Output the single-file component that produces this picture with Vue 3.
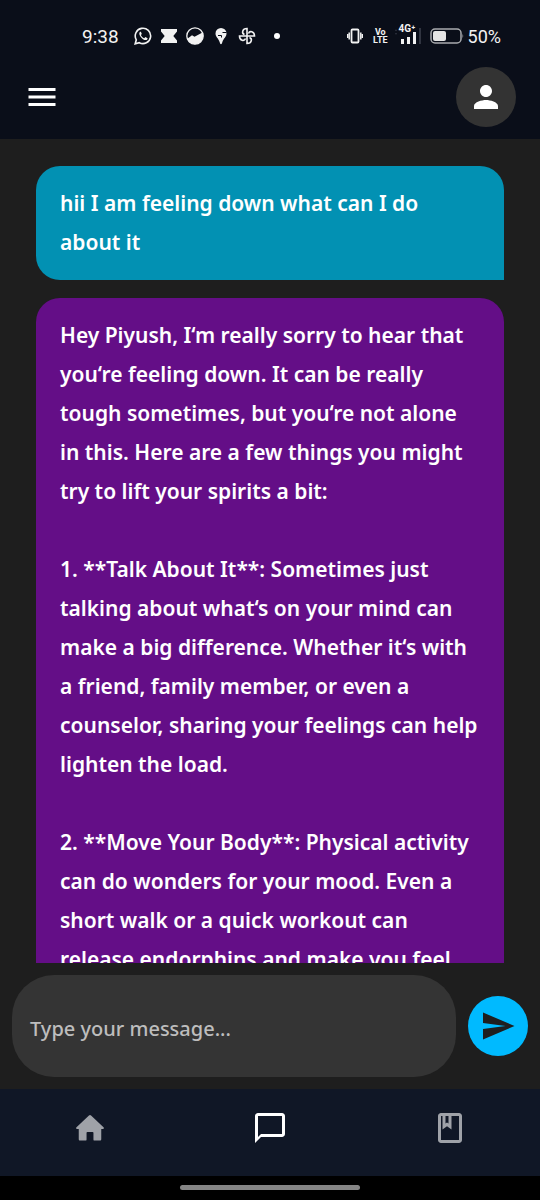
<script setup>
import { ref } from 'vue'

const draft = ref('')

const messages = [
  { from: 'user', text: 'hii I am feeling down what can I do\nabout it' },
  {
    from: 'bot',
    text: `Hey Piyush, I‘m really sorry to hear that
you‘re feeling down. It can be really
tough sometimes, but you‘re not alone
in this. Here are a few things you might
try to lift your spirits a bit:

1. **Talk About It**: Sometimes just
talking about what‘s on your mind can
make a big difference. Whether it‘s with
a friend, family member, or even a
counselor, sharing your feelings can help
lighten the load.

2. **Move Your Body**: Physical activity
can do wonders for your mood. Even a
short walk or a quick workout can
release endorphins and make you feel`,
  },
]

const tabs = [
  {
    name: 'Home',
    path: 'M11.3 3.6a1 1 0 0 1 1.4 0l8.3 7.9c.5.5.3 1.2-.4 1.2h-1.1v6.8c0 .6-.3.9-.9.9h-3.5c-.5 0-.8-.3-.8-.8v-4.4c0-.4-.2-.6-.6-.6h-3.4c-.4 0-.6.2-.6.6v4.4c0 .5-.3.8-.8.8H5.4c-.6 0-.9-.3-.9-.9v-6.8H3.4c-.7 0-.9-.7-.4-1.2z',
  },
  {
    name: 'Chat',
    active: true,
    path: 'M20 2H4c-1.1 0-2 .9-2 2v18l4-4h14c1.1 0 2-.9 2-2V4c0-1.1-.9-2-2-2zm0 14H6l-2 2V4h16v12z',
  },
  {
    name: 'Journal',
    path: 'M18 2H6c-1.1 0-2 .9-2 2v16c0 1.1.9 2 2 2h12c1.1 0 2-.9 2-2V4c0-1.1-.9-2-2-2zM9 4h2v5l-1-.75L9 9V4zm9 16H6V4h1v9l3-2.25L13 13V4h5v16z',
  },
]
</script>

<template>
  <div class="screen">
    <div class="status">
      <span class="clock">9:38</span>
      <div class="notifications">
        <svg viewBox="0 0 18 18" fill="none" stroke="currentColor">
          <path d="M1.2 16.8l1.1-4A7.7 7.7 0 1 1 5.3 15.7z" stroke-width="1.6" />
          <path d="M6.2 4.7c-1.3 1-1.2 2.6.2 4.7 1.6 2.3 3.9 3.9 5.5 3.7 1.1-.2 1.7-.9 1.7-1.9l-2.2-1.1-1.2 1.2C8.8 10.7 7.5 9.5 6.9 8.1l.9-1.1-.9-2.3z" fill="currentColor" stroke="none" />
        </svg>
        <svg viewBox="0 0 18 18" fill="currentColor">
          <path d="M1 2h16v2.5L13.3 9l3.7 4.5V16H1v-2.5L4.7 9 1 4.5z" />
        </svg>
        <svg viewBox="0 0 18 18">
          <circle cx="9" cy="9" r="8.2" fill="none" stroke="currentColor" stroke-width="1.3" />
          <path d="M1 12l5-3.8 2.5 1.5 8-4.2A8.3 8.3 0 0 1 1 12z" fill="currentColor" />
        </svg>
        <svg viewBox="0 0 18 18">
          <path d="M9 1a5.5 5.5 0 0 0-5.5 5.5c0 3.5 3 4.6 4.200 8.800.3 1.200.7 1.900 1.300 1.900s1-.7 1.300-1.900c1.200-4.200 4.200-5.300 4.200-8.800A5.500 5.500 0 0 0 9 1z" fill="currentColor" />
          <path d="M14.5 5.5h-4M6 8.5h3.500v2" fill="none" stroke="#0a0e19" stroke-width="1" />
        </svg>
        <svg viewBox="0 0 18 18" fill="none" stroke="currentColor" stroke-width="1.6">
          <path d="M9 9V1.5c-5 0-5.5 5-2.5 6M9 9h7.5c0-5-5-5.5-6-2.5M9 9v7.5c5 0 5.5-5 2.5-6M9 9H1.500c0 5 5 5.500 6 2.500" />
        </svg>
      </div>
      <span class="dot"></span>
      <div class="system">
        <svg class="vibrate" viewBox="0 0 16 16" fill="none" stroke="currentColor" stroke-width="1.5">
          <rect x="4.5" y="1.5" width="7" height="13" rx="1" stroke-width="1.8" />
          <path d="M2.2 4.5v7M13.8 4.5v7M.5 6v4M15.5 6v4" />
        </svg>
        <span class="volte">Vo<br />LTE</span>
        <div class="signal">
          <span>4G⁺</span>
          <svg viewBox="0 0 28 18">
            <path d="M7 12h3v5H7zM13 10h3v7h-3zM19 5h3v12h-3z" fill="currentColor" />
            <path d="M25 1h2v16h-2zM1 4l1-2 1 2zM1 6l1 2 1-2z" fill="#303440" />
          </svg>
        </div>
        <svg class="battery" viewBox="0 0 34 16">
          <rect x="1" y="1" width="30" height="14" rx="4" fill="none" stroke="#a9abae" stroke-width="1.5" />
          <rect x="3" y="3" width="13" height="10" rx="2" fill="#e4e4e4" />
          <path d="M32.5 5.5q1.5 2.5 0 5z" fill="#a9abae" />
        </svg>
        <span class="percent">50%</span>
      </div>
    </div>

    <header class="topbar">
      <button class="menu" aria-label="Menu">
        <svg class="icon" viewBox="0 0 24 24"><path d="M3 18h18v-2H3v2zm0-5h18v-2H3v2zm0-7v2h18V6H3z" /></svg>
      </button>
      <button class="avatar" aria-label="Profile">
        <svg class="icon" viewBox="0 0 24 24"><path d="M12 12c2.21 0 4-1.79 4-4s-1.79-4-4-4-4 1.79-4 4 1.79 4 4 4zm0 2c-2.67 0-8 1.34-8 4v2h16v-2c0-2.66-5.33-4-8-4z" /></svg>
      </button>
    </header>

    <main class="chat">
      <p v-for="m in messages" :key="m.from" class="bubble" :class="m.from">{{ m.text }}</p>
    </main>

    <form class="composer" @submit.prevent>
      <textarea v-model="draft" rows="1" aria-label="Message" placeholder="Type your message..."></textarea>
      <button class="send" aria-label="Send">
        <svg class="icon" viewBox="0 0 24 24"><path d="M2.01 21L23 12 2.01 3 2 10l15 2-15 2z" /></svg>
      </button>
    </form>

    <nav class="tabs">
      <button v-for="t in tabs" :key="t.name" :class="{ active: t.active }" :aria-label="t.name">
        <svg class="icon" viewBox="0 0 24 24"><path :d="t.path" /></svg>
      </button>
    </nav>
    <div class="gesture"><span></span></div>
  </div>
</template>

<style>
body {
  margin: 0;
  background: #1e1e1e;
}
</style>

<style scoped>
.screen {
  display: flex;
  flex-direction: column;
  height: 100vh;
  background: #1e1e1e;
  color: #fff;
  font-family: "Noto Sans", sans-serif;
}
button {
  display: flex;
  align-items: center;
  justify-content: center;
  padding: 0;
  border: 0;
  background: none;
  color: inherit;
}
svg {
  display: block;
}
.icon {
  width: 36px;
  height: 36px;
  fill: currentColor;
}
.status {
  display: flex;
  align-items: center;
  height: 40px;
  padding: 16px 39px 0 82px;
  background: #0a0e19;
  color: #f2f2f2;
  font-family: Roboto, sans-serif;
}
.clock {
  font-size: 19px;
}
.notifications {
  display: flex;
  gap: 8px;
  margin-left: 15px;
}
.notifications svg {
  width: 18px;
  height: 18px;
}
.dot {
  width: 6px;
  height: 6px;
  margin-left: 18px;
  border-radius: 50%;
  background: #fff;
}
.system {
  display: flex;
  align-items: center;
  margin-left: auto;
}
.vibrate {
  width: 16px;
  height: 16px;
}
.volte {
  margin-left: 10px;
  font-size: 9px;
  font-weight: 700;
  line-height: 8px;
  text-align: center;
}
.signal {
  position: relative;
  margin-left: 6px;
}
.signal svg {
  width: 28px;
  height: 18px;
}
.signal span {
  position: absolute;
  top: -3px;
  left: 5px;
  font-size: 10px;
  font-weight: 700;
  line-height: 10px;
}
.battery {
  width: 34px;
  height: 16px;
  margin-left: 8px;
}
.percent {
  margin-left: 4px;
  font-size: 18px;
}
.topbar {
  display: flex;
  align-items: center;
  justify-content: space-between;
  padding: 11px 24px 12px;
  background: #0a0e19;
}
.avatar {
  width: 60px;
  height: 60px;
  border-radius: 50%;
  background: #333;
}
.chat {
  display: flex;
  flex: 1;
  flex-direction: column;
  gap: 18px;
  min-height: 0;
  padding: 27px 36px 0;
  overflow: hidden;
}
.bubble {
  flex-shrink: 0;
  margin: 0;
  padding: 18px 24px;
  border-radius: 24px;
  font-size: 21px;
  font-weight: 600;
  line-height: 39px;
  white-space: pre-line;
}
.user {
  border-bottom-right-radius: 0;
  background: #0291b3;
}
.bot {
  border-bottom-left-radius: 0;
  background: #640e87;
}
.composer {
  display: flex;
  align-items: center;
  gap: 12px;
  padding: 12px;
}
textarea {
  flex: 1;
  box-sizing: border-box;
  min-width: 0;
  height: 102px;
  padding: 36px 18px 30px;
  border: 0;
  border-radius: 42px;
  outline: 0;
  background: #343434;
  color: #fff;
  font: 500 20px/36px "Noto Sans", sans-serif;
  resize: none;
}
textarea::placeholder {
  color: #bdbdbd;
}
.send {
  width: 60px;
  height: 60px;
  border-radius: 50%;
  background: #00baff;
  color: #1e1e1e;
}
.tabs {
  display: grid;
  grid-template-columns: repeat(3, 1fr);
  height: 87px;
  background: #101726;
  color: #9fa2a8;
}
.tabs button {
  padding-bottom: 9px;
}
.tabs .active {
  color: #fff;
}
.gesture {
  display: flex;
  justify-content: center;
  height: 15px;
  padding-top: 9px;
  background: #000;
}
.gesture span {
  width: 180px;
  height: 5px;
  border-radius: 3px;
  background: #858585;
}
</style>
